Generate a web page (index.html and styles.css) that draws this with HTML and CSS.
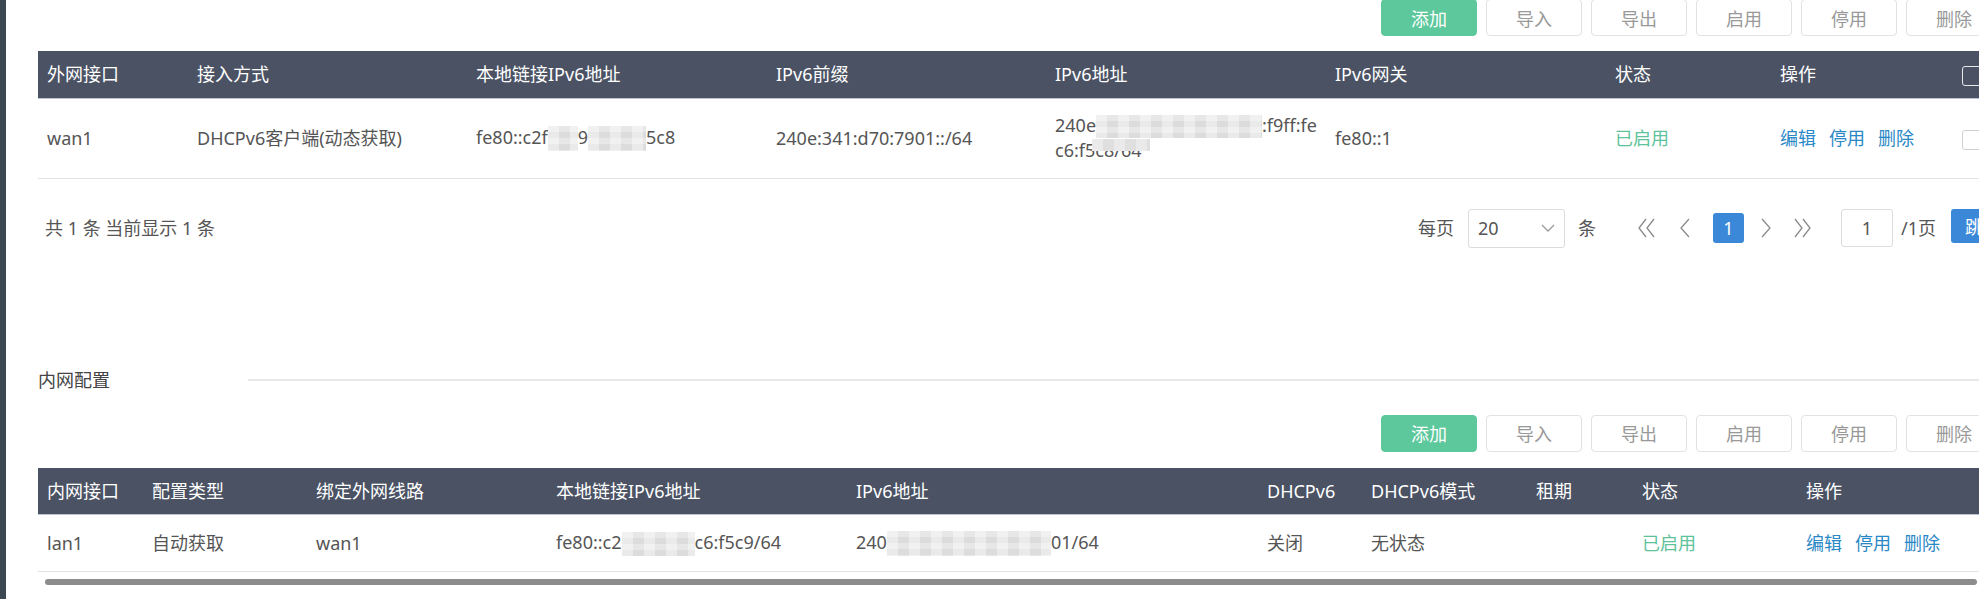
FILE: index.html
```html
<!DOCTYPE html>
<html lang="zh-CN">
<head>
<meta charset="utf-8">
<title>IPv6 配置</title>
<link rel="stylesheet" href="styles.css">
</head>
<body>
<div class="app">
  <div class="edge"></div>
  <main class="content">
    <div class="toolbar first">
      <button class="btn primary">添加</button>
      <button class="btn">导入</button>
      <button class="btn">导出</button>
      <button class="btn">启用</button>
      <button class="btn">停用</button>
      <button class="btn">删除</button>
    </div>

    <table class="grid wan">
      <colgroup>
        <col class="c150"><col class="c279"><col class="c300"><col class="c279"><col class="c280"><col class="c280"><col class="c165"><col class="c182"><col class="c49">
      </colgroup>
      <thead>
        <tr>
          <th>外网接口</th><th>接入方式</th><th>本地链接IPv6地址</th><th>IPv6前缀</th><th>IPv6地址</th><th>IPv6网关</th><th>状态</th><th>操作</th><th><span class="chk dark"></span></th>
        </tr>
      </thead>
      <tbody>
        <tr>
          <td>wan1</td>
          <td>DHCPv6客户端(动态获取)</td>
          <td>fe80::c2f<span class="mz m30"></span>9<span class="mz m58"></span>5c8</td>
          <td>240e:341:d70:7901::/64</td>
          <td class="addr">240e<span class="mz m166 thin"></span>:f9ff:fe<br>c6:f5c8/64<span class="mz-over"></span></td>
          <td>fe80::1</td>
          <td><span class="on">已启用</span></td>
          <td><a class="op">编辑</a><a class="op">停用</a><a class="op">删除</a></td>
          <td><span class="chk"></span></td>
        </tr>
      </tbody>
    </table>

    <div class="pager">
      <div class="summary">共 1 条 当前显示 1 条</div>
      <div class="pager-right">
        <span class="per">每页</span>
        <div class="select"><span>20</span>
          <svg class="caret" width="14" height="8" viewBox="0 0 14 8"><path d="M1 1 L7 7 L13 1" fill="none" stroke="#9a9a9a" stroke-width="1.3"/></svg>
        </div>
        <span class="unit">条</span>
        <svg class="nav first-p" width="19" height="20" viewBox="0 0 19 20"><path d="M9 1 L2 10 L9 19 M17 1 L10 10 L17 19" fill="none" stroke="#8a8a8a" stroke-width="1.3"/></svg>
        <svg class="nav prev" width="12" height="20" viewBox="0 0 12 20"><path d="M10 1 L2 10 L10 19" fill="none" stroke="#8a8a8a" stroke-width="1.3"/></svg>
        <span class="page">1</span>
        <svg class="nav next" width="12" height="20" viewBox="0 0 12 20"><path d="M2 1 L10 10 L2 19" fill="none" stroke="#8a8a8a" stroke-width="1.3"/></svg>
        <svg class="nav last" width="19" height="20" viewBox="0 0 19 20"><path d="M2 1 L9 10 L2 19 M10 1 L17 10 L10 19" fill="none" stroke="#8a8a8a" stroke-width="1.3"/></svg>
        <div class="pinput">1</div>
        <span class="total">/1页</span>
        <button class="jump">跳转</button>
      </div>
    </div>

    <div class="section-title">
      <span class="title">内网配置</span>
      <div class="rule"></div>
    </div>

    <div class="toolbar second">
      <button class="btn primary">添加</button>
      <button class="btn">导入</button>
      <button class="btn">导出</button>
      <button class="btn">启用</button>
      <button class="btn">停用</button>
      <button class="btn">删除</button>
    </div>

    <table class="grid lan">
      <colgroup>
        <col class="c105"><col class="c164"><col class="c240"><col class="c300"><col class="c411"><col class="c104"><col class="c165"><col class="c106"><col class="c164"><col class="c205">
      </colgroup>
      <thead>
        <tr>
          <th>内网接口</th><th>配置类型</th><th>绑定外网线路</th><th>本地链接IPv6地址</th><th>IPv6地址</th><th>DHCPv6</th><th>DHCPv6模式</th><th>租期</th><th>状态</th><th>操作</th>
        </tr>
      </thead>
      <tbody>
        <tr>
          <td>lan1</td>
          <td>自动获取</td>
          <td>wan1</td>
          <td>fe80::c2<span class="mz m73"></span>c6:f5c9/64</td>
          <td>240<span class="mz m164"></span>01/64</td>
          <td>关闭</td>
          <td>无状态</td>
          <td></td>
          <td><span class="on">已启用</span></td>
          <td><a class="op">编辑</a><a class="op">停用</a><a class="op">删除</a></td>
        </tr>
      </tbody>
    </table>

    <div class="hscroll"></div>
  </main>
</div>
</body>
</html>
```

FILE: styles.css
```css
* {
  box-sizing: border-box;
  margin: 0;
  padding: 0;
}

html,
body {
  height: 100%;
  overflow: hidden;
  background: #fff;
}

body {
  font-family: "Noto Sans", "Noto Sans CJK SC", sans-serif;
  font-size: 18px;
  line-height: 24px;
  color: #555;
}

.app {
  display: flex;
  width: 2010px;
  min-height: 100%;
}

.edge {
  flex: none;
  width: 6px;
  background: #3b4751;
}

.content {
  flex: none;
  width: 1964px;
  margin-left: 32px;
}

/* toolbars */
.toolbar {
  display: flex;
  justify-content: flex-end;
  gap: 9px;
  height: 37px;
}

.toolbar.first {
  margin-top: -1px;
  margin-bottom: 15px;
}

.toolbar.second {
  margin-bottom: 16px;
}

.btn {
  width: 96px;
  height: 37px;
  border: 1px solid #e2e2e2;
  border-radius: 4px;
  background: #fff;
  color: #999;
  font-family: inherit;
  font-size: 18px;
}

.btn.primary {
  background: #5cc89c;
  border-color: #5cc89c;
  color: #fff;
}

/* tables */
.grid {
  width: 1964px;
  table-layout: fixed;
  border-collapse: collapse;
}

.grid th {
  height: 47px;
  padding: 0 9px;
  background: #4a5264;
  color: #fff;
  font-weight: normal;
  text-align: left;
  white-space: nowrap;
  border-bottom: 1px solid #b9c5d3;
}

.grid td {
  padding: 0 9px;
  line-height: 25px;
  white-space: nowrap;
  border-bottom: 1px solid #e3e3e3;
}

.wan td {
  height: 80px;
}

.lan td {
  height: 57px;
}

.c49 { width: 49px; }
.c104 { width: 104px; }
.c105 { width: 105px; }
.c106 { width: 106px; }
.c150 { width: 150px; }
.c164 { width: 164px; }
.c165 { width: 165px; }
.c182 { width: 182px; }
.c205 { width: 205px; }
.c240 { width: 240px; }
.c279 { width: 279px; }
.c280 { width: 280px; }
.c300 { width: 300px; }
.c411 { width: 411px; }

.addr {
  position: relative;
}

/* mosaic (censored) blocks */
.mz {
  display: inline-block;
  height: 25px;
  vertical-align: middle;
  background-color: #dcdcdc;
  background-image:
    linear-gradient(90deg, rgba(255, 255, 255, 0.4) 50%, rgba(0, 0, 0, 0) 50%),
    linear-gradient(rgba(255, 255, 255, 0.3) 50%, rgba(0, 0, 0, 0) 50%);
  background-size: 22px 100%, 100% 12px;
}

.mz.thin {
  height: 23px;
}

.m30 { width: 30px; }
.m58 { width: 58px; }
.m73 { width: 73px; height: 24px; }
.m164 { width: 164px; }
.m166 { width: 166px; }

.mz-over {
  position: absolute;
  left: 46px;
  top: 40px;
  width: 58px;
  height: 12px;
  background-color: #dfdfdf;
  background-image: linear-gradient(90deg, rgba(255, 255, 255, 0.35) 50%, rgba(0, 0, 0, 0) 50%);
  background-size: 22px 100%;
}

.on {
  color: #5ec29b;
}

.op {
  color: #2a88c6;
  margin-right: 13px;
  text-decoration: none;
  cursor: pointer;
}

.chk {
  display: inline-block;
  width: 20px;
  height: 20px;
  vertical-align: middle;
  border: 1px solid #d0d0d0;
  border-radius: 3px;
  background: #fff;
}

.chk.dark {
  background: transparent;
  border-color: #e8e8e8;
}

/* pager */
.pager {
  display: flex;
  justify-content: space-between;
  align-items: center;
  height: 39px;
  margin-top: 30px;
  padding-left: 7px;
}

.summary {
  color: #555;
}

.pager-right {
  display: flex;
  align-items: center;
  height: 39px;
  color: #555;
}

.per {
  margin-right: 14px;
}

.select {
  display: flex;
  align-items: center;
  justify-content: space-between;
  width: 97px;
  height: 39px;
  margin-right: 13px;
  padding: 0 9px 0 9px;
  border: 1px solid #dcdcdc;
  border-radius: 3px;
}

.unit {
  margin-right: 41px;
}

.nav {
  flex: none;
}

.first-p {
  margin-right: 23px;
}

.prev {
  margin-right: 22px;
}

.page {
  display: flex;
  align-items: center;
  justify-content: center;
  width: 31px;
  height: 30px;
  margin-right: 16px;
  background: #3b88d8;
  color: #fff;
  border-radius: 3px;
}

.next {
  margin-right: 21px;
}

.last {
  margin-right: 29px;
}

.pinput {
  display: flex;
  align-items: center;
  justify-content: center;
  width: 52px;
  height: 38px;
  margin-right: 8px;
  border: 1px solid #dcdcdc;
  border-radius: 3px;
}

.total {
  margin-right: 15px;
}

.jump {
  align-self: flex-start;
  width: 51px;
  height: 34px;
  padding-left: 14px;
  text-align: left;
  white-space: nowrap;
  overflow: hidden;
  border: none;
  border-radius: 3px 0 0 3px;
  background: #3b88d8;
  color: #fff;
  font-family: inherit;
  font-size: 18px;
}

/* section title */
.section-title {
  display: flex;
  align-items: center;
  height: 24px;
  margin-top: 120px;
  margin-bottom: 23px;
}

.title {
  flex: none;
  width: 210px;
  color: #444;
}

.rule {
  flex: 1;
  height: 2px;
  background: #e8e8e8;
}

/* horizontal scrollbar thumb */
.hscroll {
  height: 6px;
  margin: 7px 25px 0 7px;
  background: #8c8c8c;
  border-radius: 3px;
}
```
